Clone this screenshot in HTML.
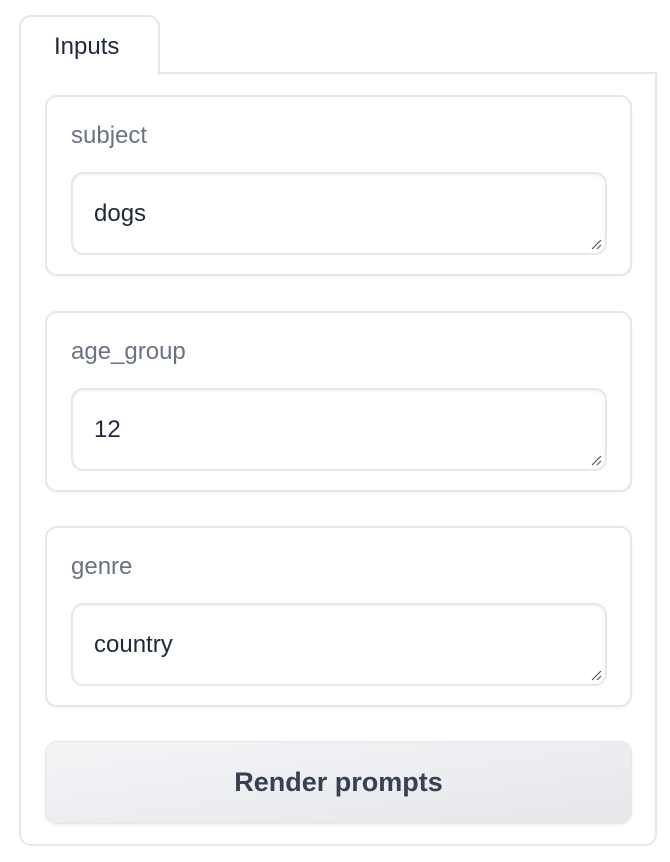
<!DOCTYPE html>
<html><head><meta charset="utf-8"><style>
*{box-sizing:border-box;margin:0;padding:0}
body{width:670px;height:862px;background:#fff;font-family:"Liberation Sans",sans-serif;position:relative;overflow:hidden}
.tab{position:absolute;left:19px;top:15px;width:141px;height:60px;border:2px solid #e5e7eb;border-bottom:none;border-radius:12px 12px 0 0;background:#fff;z-index:2;font-size:24px;color:#1f2937;padding:16px 0 0 33px}
.panel{position:absolute;left:19px;top:72px;width:638px;height:774px;border:2px solid #e5e7eb;border-radius:0 0 12px 12px}
.blk{position:absolute;left:45px;width:587px;height:181px;border:2px solid #e5e7eb;border-radius:12px;box-shadow:0 1px 2px rgba(0,0,0,.05)}
.lbl{position:absolute;left:24px;top:25px;font-size:24px;color:#6b7280}
.inp{position:absolute;left:24px;top:75px;width:536px;height:83px;border:2px solid #e5e7eb;border-radius:12px;box-shadow:inset 0 1px 3px rgba(0,0,0,.06);font-size:24px;color:#1f2937;padding:26px 0 0 21px}
.inp svg{position:absolute;right:3px;bottom:3px}
.btn{position:absolute;left:45px;top:741px;width:587px;height:83px;border:1px solid #e5e7eb;border-radius:12px;background:linear-gradient(to bottom right,#f3f4f6,#e5e7eb);box-shadow:0 1px 3px rgba(0,0,0,.08);font-size:27px;font-weight:bold;color:#374151;text-align:center;line-height:81px}
</style></head><body>
<div class="tab">Inputs</div>
<div class="panel"></div>
<div class="blk" style="top:95px"><div class="lbl">subject</div><div class="inp">dogs<svg width="12" height="12"><path d="M2 11L11 2M7 11L11 7" stroke="#555" stroke-width="1.2"/></svg></div></div>
<div class="blk" style="top:311px"><div class="lbl">age_group</div><div class="inp">12<svg width="12" height="12"><path d="M2 11L11 2M7 11L11 7" stroke="#555" stroke-width="1.2"/></svg></div></div>
<div class="blk" style="top:526px"><div class="lbl">genre</div><div class="inp">country<svg width="12" height="12"><path d="M2 11L11 2M7 11L11 7" stroke="#555" stroke-width="1.2"/></svg></div></div>
<div class="btn">Render prompts</div>
</body></html>
